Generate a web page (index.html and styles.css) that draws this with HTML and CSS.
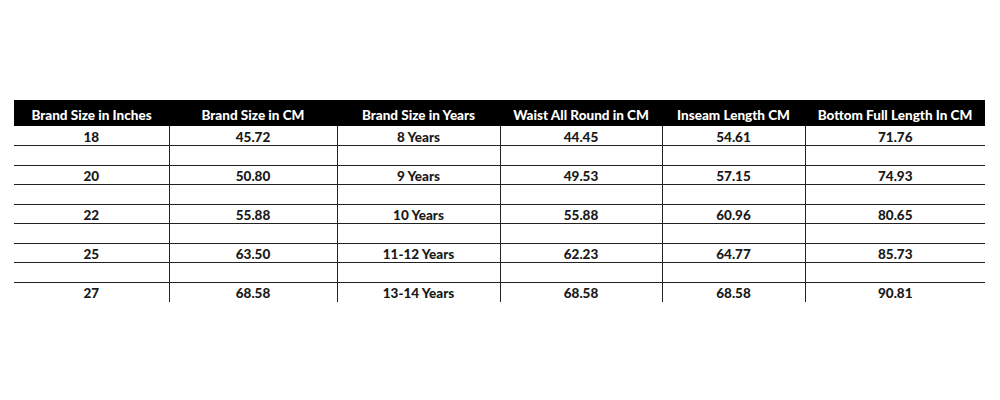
FILE: index.html
```html
<!DOCTYPE html>
<html>
<head>
<meta charset="utf-8">
<link rel="stylesheet" href="styles.css">
</head>
<body>
<div class="page">
<table class="size-chart">
  <colgroup>
    <col class="c1"><col class="c2"><col class="c3"><col class="c4"><col class="c5"><col class="c6">
  </colgroup>
  <thead>
    <tr>
      <th>Brand Size in Inches</th>
      <th>Brand Size in CM</th>
      <th>Brand Size in Years</th>
      <th>Waist All Round in CM</th>
      <th>Inseam Length CM</th>
      <th>Bottom Full Length In CM</th>
    </tr>
  </thead>
  <tbody>
    <tr><td>18</td><td>45.72</td><td>8 Years</td><td>44.45</td><td>54.61</td><td>71.76</td></tr>
    <tr class="blank"><td></td><td></td><td></td><td></td><td></td><td></td></tr>
    <tr><td>20</td><td>50.80</td><td>9 Years</td><td>49.53</td><td>57.15</td><td>74.93</td></tr>
    <tr class="blank"><td></td><td></td><td></td><td></td><td></td><td></td></tr>
    <tr><td>22</td><td>55.88</td><td>10 Years</td><td>55.88</td><td>60.96</td><td>80.65</td></tr>
    <tr class="blank"><td></td><td></td><td></td><td></td><td></td><td></td></tr>
    <tr><td>25</td><td>63.50</td><td>11-12 Years</td><td>62.23</td><td>64.77</td><td>85.73</td></tr>
    <tr class="blank"><td></td><td></td><td></td><td></td><td></td><td></td></tr>
    <tr class="last"><td>27</td><td>68.58</td><td>13-14 Years</td><td>68.58</td><td>68.58</td><td>90.81</td></tr>
  </tbody>
</table>
</div>
</body>
</html>
```
FILE: styles.css
```css
html, body {
  margin: 0;
  padding: 0;
  background: #ffffff;
}
.page {
  width: 1000px;
  height: 400px;
  padding: 100px 0 0 14px;
  box-sizing: border-box;
}
.size-chart {
  border-collapse: collapse;
  table-layout: fixed;
  width: 971px;
  font-family: Lato, "Open Sans", sans-serif;
  font-weight: 900;
  font-size: 13.5px;
  color: #1a1a1a;
}
.c1 { width: 155px; }
.c2 { width: 168px; }
.c3 { width: 163px; }
.c4 { width: 162px; }
.c5 { width: 143px; }
.c6 { width: 180px; }
.size-chart th {
  background: #000000;
  color: #ffffff;
  height: 26px;
  padding: 3px 0 0 0;
  text-align: center;
  vertical-align: middle;
  font-weight: 900;
  box-sizing: border-box;
}
.size-chart td {
  height: 19.55px;
  padding: 2px 0 0 0;
  text-align: center;
  vertical-align: middle;
  border-bottom: 1px solid #222222;
  border-left: 1px solid #222222;
  line-height: 16px;
  box-sizing: border-box;
}
.size-chart td:first-child {
  border-left: none;
}
.size-chart tr.last td {
  border-bottom: none;
}
```
